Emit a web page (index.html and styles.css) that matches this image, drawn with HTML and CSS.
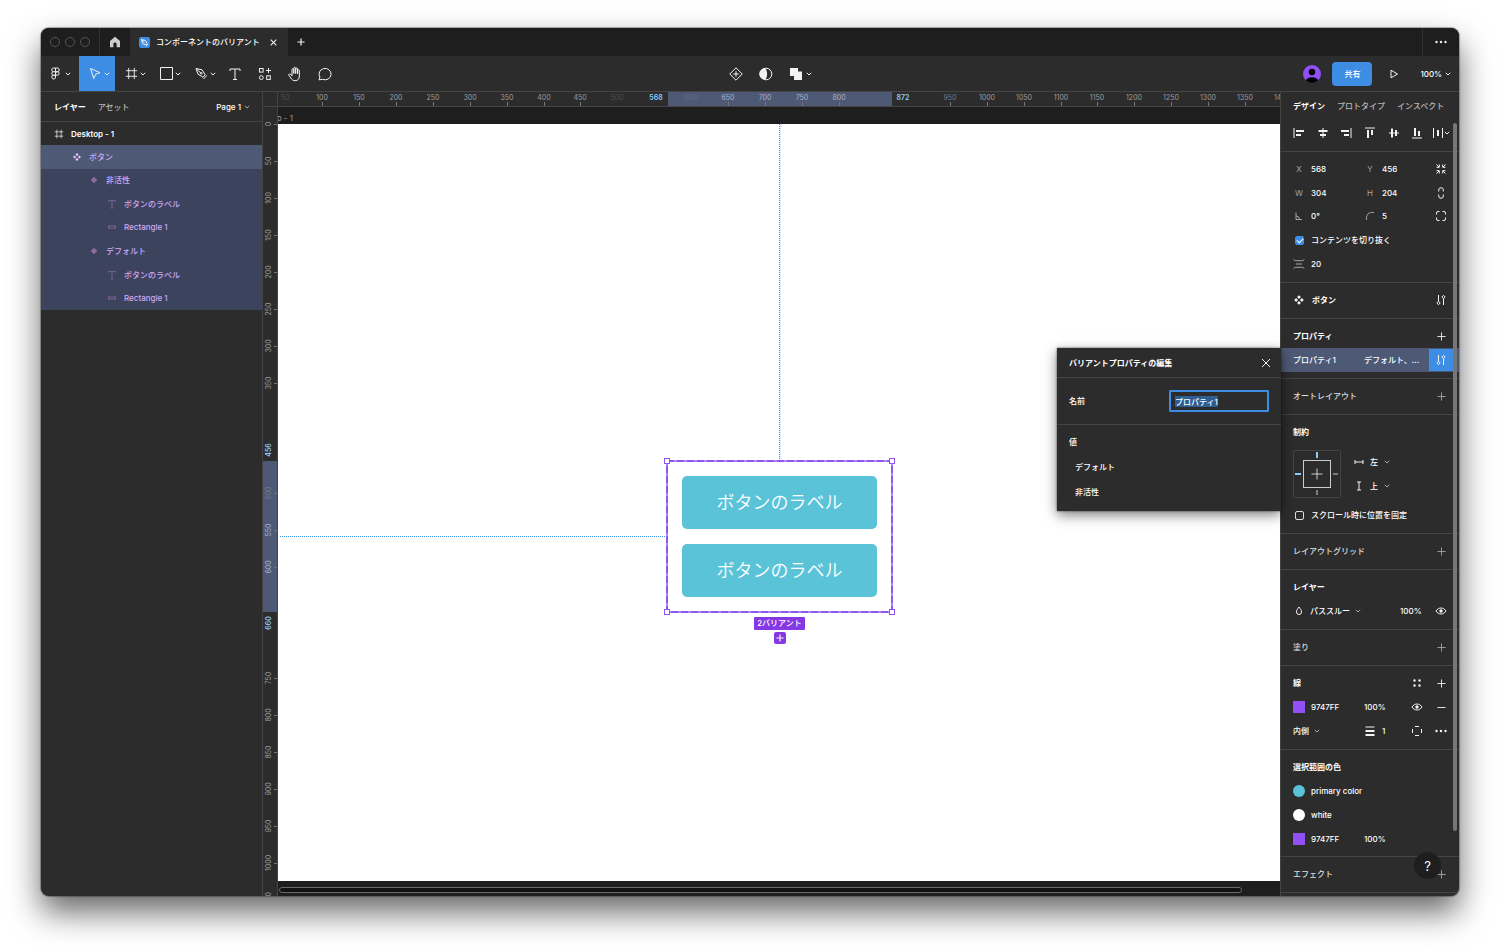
FILE: index.html
```html
<!DOCTYPE html>
<html lang="ja">
<head>
<meta charset="utf-8">
<title>コンポーネントのバリアント</title>
<link rel="stylesheet" href="styles.css">
</head>
<body>
<svg class="sprite" aria-hidden="true">
  <symbol id="chev" viewBox="0 0 6 6"><path d="M.8 1.800 3 4l2.200-2.200"/></symbol>
  <symbol id="plus" viewBox="0 0 10 10"><path d="M5 .5v9M.5 5h9"/></symbol>
  <symbol id="minus" viewBox="0 0 10 10"><path d="M.5 5h9"/></symbol>
  <symbol id="close" viewBox="0 0 10 10"><path d="m1 1 8 8M9 1 1 9"/></symbol>
  <symbol id="dots" viewBox="0 0 12 12"><g class="fill"><circle cx="1.500" cy="6" r="1.200"/><circle cx="6" cy="6" r="1.200"/><circle cx="10.500" cy="6" r="1.200"/></g></symbol>
  <symbol id="eye" viewBox="0 0 12 12"><path d="M1 6c2.500-4 7.500-4 10 0-2.500 4-7.500 4-10 0z"/><circle class="fill" cx="6" cy="6" r="1.700"/></symbol>
  <symbol id="tune" viewBox="0 0 12 12"><path d="M3.500 1v6.500M8.500 4.500V11M3.500 7.300 5.200 9 3.500 10.700 1.800 9zM8.500 1.300 10.200 3 8.500 4.700 6.800 3z"/></symbol>
  <symbol id="frame" viewBox="0 0 14 14"><path d="M4 1v12M10 1v12M1 4h12M1 10h12"/></symbol>
  <symbol id="text" viewBox="0 0 14 14"><path d="M2 4V2h10v2M7 2v10.500M5 12.500h4"/></symbol>
  <symbol id="component" viewBox="0 0 12 12"><g class="fill"><path d="m6 1.200 1.900 1.900L6 5 4.100 3.100zM6 7l1.900 1.900L6 10.800 4.100 8.900zM3.100 4.100 5 6 3.100 7.900 1.200 6zM8.900 4.100 10.800 6 8.900 7.900 7 6z"/></g></symbol>
  <symbol id="variant" viewBox="0 0 12 12"><path class="fill" d="M6 2 10 6 6 10 2 6z"/></symbol>
  <symbol id="bar" viewBox="0 0 12 12"><rect x="2" y="4.800" width="8" height="2.600"/></symbol>
</svg>

<div class="window">
  <header class="titlebar">
    <div class="lights"><i></i><i></i><i></i></div>
    <button class="home" aria-label="ホーム"><svg class="i12" viewBox="0 0 12 12"><path class="fill" d="M6 .8 11 5v6.200H7.600V8c0-2-3.200-2-3.200 0v3.200H1V5z"/></svg></button>
    <div class="doc-tab">
      <svg class="i11" viewBox="0 0 11 11"><rect class="favicon" width="11" height="11" rx="2"/><path d="M2.500 2.500 6.500 3.500 8 6.500 6.800 8 3.600 6.600zM2.500 2.500l3 3M7 9l1.800-1.800"/></svg>
      <span class="doc-name">コンポーネントのバリアント</span>
      <button aria-label="タブを閉じる"><svg class="i7 bold"><use href="#close"/></svg></button>
    </div>
    <button class="new-tab" aria-label="新しいタブ"><svg class="i8 bold"><use href="#plus"/></svg></button>
    <button class="more" aria-label="その他"><svg class="i12"><use href="#dots"/></svg></button>
  </header>

  <nav class="toolbar">
    <div class="tools">
      <button class="tool menu" aria-label="メニュー"><svg class="i13" viewBox="0 0 13 13"><path d="M6.500 1v3.700H4.600a1.850 1.850 0 0 1 0-3.700zM6.500 1h1.900a1.850 1.850 0 0 1 0 3.700H6.500M6.500 4.700v3.600H4.600a1.800 1.800 0 0 1 0-3.600M4.600 8.300h1.900V10a1.850 1.850 0 1 1-1.900-1.700z"/><circle cx="8.300" cy="6.500" r="1.800"/></svg><svg class="chev"><use href="#chev"/></svg></button>
      <button class="tool active" aria-label="移動"><svg class="i13" viewBox="0 0 13 13"><path d="m1.500 1.500 9.500 4.200-4.300 1.500-2 4.300z"/></svg><svg class="chev"><use href="#chev"/></svg></button>
      <button class="tool" aria-label="フレーム"><svg class="i13"><use href="#frame"/></svg><svg class="chev"><use href="#chev"/></svg></button>
      <button class="tool" aria-label="長方形"><svg class="i13" viewBox="0 0 13 13"><path d="M.5.5h12v12H.5z"/></svg><svg class="chev"><use href="#chev"/></svg></button>
      <button class="tool" aria-label="ペン"><svg class="i13" viewBox="0 0 13 13"><path d="M1 1.500 7 2.800l3.200 5L8 10.200 3 7.200zM1 1.500l4.600 4.300M8.500 12l3.300-3.600"/><circle cx="6.200" cy="6.300" r=".9"/></svg><svg class="chev"><use href="#chev"/></svg></button>
      <button class="tool single" aria-label="テキスト"><svg class="i14"><use href="#text"/></svg></button>
      <button class="tool single" aria-label="リソース"><svg class="i14" viewBox="0 0 14 14"><rect x="1.500" y="1.500" width="3.600" height="3.600"/><path d="M10.500 1v5M8 3.500h5"/><circle cx="3.300" cy="10.600" r="1.900"/><rect x="8.700" y="8.800" width="3.600" height="3.600"/></svg></button>
      <button class="tool single" aria-label="手のひら"><svg class="i16" viewBox="0 0 16 16"><path d="M5 9V3.600c0-1.300 1.800-1.300 1.800 0V7.500 2.300c0-1.300 1.900-1.300 1.900 0v5.200V3c0-1.300 1.900-1.300 1.900 0v5V4.700c0-1.200 1.800-1.200 1.800 0V10c0 3-1.600 4.700-4.300 4.700-2 0-3.200-.9-4.200-2.700L1.800 9.300C1.300 8 2.800 7.400 3.600 8.400L5 10z"/></svg></button>
      <button class="tool single" aria-label="コメント"><svg class="i14" viewBox="0 0 14 14"><path d="M1 12.800 1.900 10A6 5.700 0 1 1 4.600 12.300z"/></svg></button>
    </div>
    <div class="object-tools">
      <button aria-label="コンポーネント"><svg class="i14" viewBox="0 0 14 14"><path d="M7 .8 13.200 7 7 13.200.8 7zM7 4.300v5.400M4.300 7h5.400"/></svg></button>
      <button aria-label="マスク"><svg class="i14" viewBox="0 0 14 14"><circle cx="7" cy="7" r="5.800"/><path class="fill" d="M6 1.200a5.800 5.800 0 0 0 0 11.600c2.800-2 2.800-9.600 0-11.600z"/></svg></button>
      <button class="bool" aria-label="選択範囲の結合"><svg class="i14" viewBox="0 0 14 14"><path class="fill" d="M1 1h8v3.500h4V13H5V9H1z"/></svg><svg class="chev"><use href="#chev"/></svg></button>
    </div>
    <div class="session">
      <svg class="avatar" viewBox="0 0 18 18"><circle class="av-bg" cx="9" cy="9" r="9"/><circle class="av-fg" cx="9" cy="7" r="3.200"/><path class="av-fg" d="M2.800 15.500C4 11 14 11 15.200 15.500A9 9 0 0 1 2.800 15.500z"/></svg>
      <button class="share">共有</button>
      <button class="play" aria-label="プレゼンテーション"><svg class="i10" viewBox="0 0 10 10"><path d="M2 1.200 8.500 5 2 8.800z"/></svg></button>
      <button class="zoom">100%<svg class="chev"><use href="#chev"/></svg></button>
    </div>
  </nav>

  <div class="workspace">
    <aside class="layers">
      <div class="layers-head">
        <button class="on">レイヤー</button><button>アセット</button>
        <button class="page">Page 1<svg class="chev dim"><use href="#chev"/></svg></button>
      </div>
      <ul class="tree">
        <li class="root"><svg class="i10"><use href="#frame"/></svg>Desktop - 1</li>
      </ul>
      <ul class="tree picked">
        <li class="lv1"><svg class="i10"><use href="#component"/></svg>ボタン</li>
        <li class="lv2"><svg class="i10"><use href="#variant"/></svg>非活性</li>
        <li class="lv3"><svg class="i10"><use href="#text"/></svg>ボタンのラベル</li>
        <li class="lv3"><svg class="i10"><use href="#bar"/></svg>Rectangle 1</li>
        <li class="lv2"><svg class="i10"><use href="#variant"/></svg>デフォルト</li>
        <li class="lv3"><svg class="i10"><use href="#text"/></svg>ボタンのラベル</li>
        <li class="lv3"><svg class="i10"><use href="#bar"/></svg>Rectangle 1</li>
      </ul>
    </aside>

    <main class="stage">
      <div class="corner"></div>
      <svg class="ruler-x">
        <rect class="band" x="390" y="0" width="224" height="14"/>
        <path class="ticks" d="M44.500 10v4M81.500 10v4M118.500 10v4M155.500 10v4M192.500 10v4M229.500 10v4M266.500 10v4M302.500 10v4M450.500 10v4M487.500 10v4M524.500 10v4M561.500 10v4M672.500 10v4M709.500 10v4M746.500 10v4M783.500 10v4M819.500 10v4M856.500 10v4M893.500 10v4M930.500 10v4M967.500 10v4"/>
        <g>
          <text class="faint" x="7" y="8">50</text><text x="44" y="8">100</text><text x="81" y="8">150</text><text x="118" y="8">200</text><text x="155" y="8">250</text><text x="192" y="8">300</text><text x="229" y="8">350</text><text x="266" y="8">400</text><text x="302" y="8">450</text><text class="faint" x="339" y="8">500</text><text class="edge" x="378" y="8">568</text><text class="ghost" x="413" y="8">600</text><text class="in" x="450" y="8">650</text><text class="in" x="487" y="8">700</text><text class="in" x="524" y="8">750</text><text class="in" x="561" y="8">800</text><text class="edge" x="625" y="8">872</text><text class="soft" x="672" y="8">950</text><text x="709" y="8">1000</text><text x="746" y="8">1050</text><text x="783" y="8">1100</text><text x="819" y="8">1150</text><text x="856" y="8">1200</text><text x="893" y="8">1250</text><text x="930" y="8">1300</text><text x="967" y="8">1350</text><text x="1004" y="8">1400</text>
        </g>
      </svg>
      <svg class="ruler-y">
        <rect class="band" x="0" y="354" width="15" height="151"/>
        <path class="ticks" d="M11 17.500h3M11 54.500h3M11 91.500h3M11 128.500h3M11 165.500h3M11 202.500h3M11 239.500h3M11 276.500h3M11 386.500h3M11 423.500h3M11 460.500h3M11 571.500h3M11 608.500h3M11 645.500h3M11 682.500h3M11 719.500h3M11 756.500h3"/>
        <g transform="rotate(-90)">
          <text x="-17" y="8">0</text><text x="-54" y="8">50</text><text x="-91" y="8">100</text><text x="-128" y="8">150</text><text x="-165" y="8">200</text><text x="-202" y="8">250</text><text x="-239" y="8">300</text><text x="-276" y="8">350</text><text class="edge" x="-343" y="8">456</text><text class="soft" x="-386" y="8">500</text><text class="in" x="-423" y="8">550</text><text class="in" x="-460" y="8">600</text><text class="edge" x="-516" y="8">660</text><text x="-571" y="8">750</text><text x="-608" y="8">800</text><text x="-645" y="8">850</text><text x="-682" y="8">900</text><text x="-719" y="8">950</text><text x="-756" y="8">1000</text><text x="-793" y="8">1050</text>
        </g>
      </svg>
      <div class="canvas">
        <div class="frame-name"><span>Desktop - 1</span></div>
        <div class="artboard">
          <i class="guide-v"></i><i class="guide-h"></i>
          <div class="set">
            <svg class="outline"><rect class="solid" width="100%" height="100%"/><rect class="dash" width="100%" height="100%"/></svg>
            <div class="sample">ボタンのラベル</div>
            <div class="sample">ボタンのラベル</div>
            <i class="handle tl"></i><i class="handle tr"></i><i class="handle bl"></i><i class="handle br"></i>
          </div>
          <div class="set-info">
            <span class="count">2バリアント</span>
            <button class="add" aria-label="バリアントを追加"><svg class="i8 bold"><use href="#plus"/></svg></button>
          </div>
        </div>
        <div class="scroll-x"><i></i></div>

        <section class="popover">
          <header><h2>バリアントプロパティの編集</h2><button aria-label="閉じる"><svg class="i10"><use href="#close"/></svg></button></header>
          <div class="name-row"><label for="prop-name">名前</label><input id="prop-name" type="text" value="プロパティ1" autofocus></div>
          <div class="values"><h3>値</h3><p>デフォルト</p><p>非活性</p></div>
        </section>
      </div>
    </main>

    <aside class="inspector">
      <div class="tabs"><button class="on">デザイン</button><button>プロトタイプ</button><button>インスペクト</button></div>
      <div class="align">
        <button aria-label="左揃え"><svg class="i12" viewBox="0 0 12 12"><path d="M1 1v10"/><path class="thick" d="M3 4h8M3 8h5"/></svg></button>
        <button aria-label="水平方向の中央揃え"><svg class="i12" viewBox="0 0 12 12"><path d="M6 1v10"/><path class="thick" d="M1.500 4h9M3 8h6"/></svg></button>
        <button aria-label="右揃え"><svg class="i12" viewBox="0 0 12 12"><path d="M11 1v10"/><path class="thick" d="M1 4h8M4 8h5"/></svg></button>
        <button aria-label="上揃え"><svg class="i12" viewBox="0 0 12 12"><path d="M1 1h10"/><path class="thick" d="M4 3v8M8 3v5"/></svg></button>
        <button aria-label="垂直方向の中央揃え"><svg class="i12" viewBox="0 0 12 12"><path d="M1 6h10"/><path class="thick" d="M4 1.500v9M8 3v6"/></svg></button>
        <button aria-label="下揃え"><svg class="i12" viewBox="0 0 12 12"><path d="M1 11h10"/><path class="thick" d="M4 1v8M8 4v5"/></svg></button>
        <button aria-label="分布"><svg class="i12" viewBox="0 0 12 12"><path d="M1.500 1v10M10.500 1v10"/><path class="thick" d="M6 3v6"/></svg><svg class="chev"><use href="#chev"/></svg></button>
      </div>

      <section class="geometry">
        <div class="row">
          <label class="field"><span>X</span><input type="text" value="568"></label>
          <label class="field"><span>Y</span><input type="text" value="456"></label>
          <button aria-label="サイズ自動調整"><svg class="i12" viewBox="0 0 12 12"><path d="M1.500 1.500 4 4M1.500 4.300h2.800V1.500M10.500 1.500 8 4M10.500 4.300H7.700V1.500M1.500 10.500 4 8M1.500 7.700h2.800v2.800M10.500 10.500 8 8M10.500 7.700H7.700v2.800"/></svg></button>
        </div>
        <div class="row">
          <label class="field"><span>W</span><input type="text" value="304"></label>
          <label class="field"><span>H</span><input type="text" value="204"></label>
          <button aria-label="縦横比を固定"><svg class="i12" viewBox="0 0 12 12"><path d="M3.700 4.500V3a2.300 2.300 0 0 1 4.600 0v1.500M3.700 7.500V9a2.300 2.300 0 0 0 4.600 0V7.500"/></svg></button>
        </div>
        <div class="row">
          <label class="field"><svg class="i12 dim" viewBox="0 0 12 12" aria-label="回転"><path d="M3 2.500v7h6M3 6a3.500 3.500 0 0 1 3.500 3.500"/></svg><input type="text" value="0°"></label>
          <label class="field"><svg class="i12 dim" viewBox="0 0 12 12" aria-label="角の半径"><path d="M2.500 10V7.500A5 5 0 0 1 7.500 2.500H10"/></svg><input type="text" value="5"></label>
          <button aria-label="個別の角"><svg class="i12" viewBox="0 0 12 12"><path d="M1.500 4.500V3A1.500 1.500 0 0 1 3 1.500h1.500M7.500 1.500H9A1.500 1.500 0 0 1 10.500 3v1.500M10.500 7.500V9A1.500 1.500 0 0 1 9 10.500H7.500M4.500 10.500H3A1.500 1.500 0 0 1 1.500 9V7.500"/></svg></button>
        </div>
        <label class="check"><input type="checkbox" checked>コンテンツを切り抜く</label>
        <div class="row"><label class="field"><svg class="i12 dim" viewBox="0 0 12 12" aria-label="間隔"><path d="M1 1.200c.3 1.500.8 1.500 1.500 1.500h7c.7 0 1.200 0 1.500-1.500M3 6h6M1 10.800c.3-1.500.8-1.500 1.500-1.500h7c.7 0 1.200 0 1.500 1.500"/></svg><input type="text" value="20"></label></div>
      </section>

      <section>
        <div class="head"><h3 class="named"><svg class="i12"><use href="#component"/></svg>ボタン</h3><button aria-label="設定"><svg class="i12"><use href="#tune"/></svg></button></div>
      </section>
      <section>
        <div class="head"><h3>プロパティ</h3><button aria-label="追加"><svg class="i9"><use href="#plus"/></svg></button></div>
        <div class="row property"><span>プロパティ1</span><span class="clip">デフォルト、...</span><button aria-label="編集"><svg class="i12"><use href="#tune"/></svg></button></div>
      </section>
      <section>
        <div class="head"><h3 class="off">オートレイアウト</h3><button aria-label="追加"><svg class="i9 dim"><use href="#plus"/></svg></button></div>
      </section>
      <section>
        <div class="head"><h3>制約</h3></div>
        <div class="constraints">
          <svg class="pin" viewBox="0 0 48 48"><rect class="edge-box" x=".5" y=".5" width="47" height="47" rx="1"/><rect x="10.500" y="10.500" width="27" height="27"/><path d="M24 18.500v11M18.500 24h11M40 24h5M24 40v5"/><path class="on" d="M24 2v6M2 24h6"/></svg>
          <div class="picks">
            <div class="pick"><svg class="i10" viewBox="0 0 10 10"><path d="M1 3v4M9 3v4M1 5h8"/></svg><select aria-label="水平方向の制約"><option>左</option></select><svg class="chev dim"><use href="#chev"/></svg></div>
            <div class="pick"><svg class="i10" viewBox="0 0 10 10"><path d="M3 1h4M3 9h4M5 1v8"/></svg><select aria-label="垂直方向の制約"><option>上</option></select><svg class="chev dim"><use href="#chev"/></svg></div>
          </div>
        </div>
        <label class="check"><input type="checkbox">スクロール時に位置を固定</label>
      </section>
      <section>
        <div class="head"><h3 class="off">レイアウトグリッド</h3><button aria-label="追加"><svg class="i9 dim"><use href="#plus"/></svg></button></div>
      </section>
      <section>
        <div class="head"><h3>レイヤー</h3></div>
        <div class="row blend">
          <div class="pick"><svg class="i12" viewBox="0 0 12 12"><path d="M6 2C4.500 4 3.500 5.200 3.500 7a2.500 2.500 0 0 0 5 0C8.500 5.200 7.500 4 6 2z"/></svg><select aria-label="ブレンドモード"><option>パススルー</option></select><svg class="chev dim"><use href="#chev"/></svg></div>
          <input type="text" value="100%" aria-label="不透明度"><button aria-label="表示"><svg class="i12"><use href="#eye"/></svg></button>
        </div>
      </section>
      <section>
        <div class="head"><h3 class="off">塗り</h3><button aria-label="追加"><svg class="i9 dim"><use href="#plus"/></svg></button></div>
      </section>
      <section>
        <div class="head"><h3>線</h3><button aria-label="スタイル"><svg class="i12" viewBox="0 0 12 12"><g class="fill"><circle cx="3.500" cy="3.500" r="1.200"/><circle cx="8.500" cy="3.500" r="1.200"/><circle cx="3.500" cy="8.500" r="1.200"/><circle cx="8.500" cy="8.500" r="1.200"/></g></svg></button><button aria-label="追加"><svg class="i9"><use href="#plus"/></svg></button></div>
        <div class="row stroke"><label class="field"><i class="swatch violet"></i><input type="text" value="9747FF"></label><input type="text" value="100%" aria-label="線の不透明度"><button aria-label="表示"><svg class="i12"><use href="#eye"/></svg></button><button aria-label="削除"><svg class="i9"><use href="#minus"/></svg></button></div>
        <div class="row stroke"><div class="pick"><select aria-label="線の位置"><option>内側</option></select><svg class="chev dim"><use href="#chev"/></svg></div><label class="field"><svg class="i12" viewBox="0 0 12 12" aria-label="線幅"><path d="M1.500 2h9"/><path class="thick" d="M1.500 6h9M1.500 10h9"/></svg><input type="text" value="1"></label><button aria-label="個別の線"><svg class="i12" viewBox="0 0 12 12"><path d="M4 1.500h4M4 10.500h4M1.500 4v4M10.500 4v4M2.500 2.500h.1M9.500 2.500h.1M2.500 9.500h.1M9.500 9.500h.1"/></svg></button><button aria-label="詳細"><svg class="i12"><use href="#dots"/></svg></button></div>
      </section>
      <section class="colors">
        <div class="head"><h3>選択範囲の色</h3></div>
        <div class="row"><span class="style"><i class="swatch round aqua"></i>primary color</span></div>
        <div class="row"><span class="style"><i class="swatch round white"></i>white</span></div>
        <div class="row"><label class="field"><i class="swatch violet"></i><input type="text" value="9747FF"></label><input type="text" value="100%" aria-label="色の不透明度"></div>
      </section>
      <section>
        <div class="head"><h3 class="off">エフェクト</h3><button aria-label="追加"><svg class="i9 dim"><use href="#plus"/></svg></button></div>
      </section>
      <i class="scroll-y"></i>
      <button class="help" aria-label="ヘルプ">?</button>
    </aside>
  </div>
</div>
<script src="app.js"></script>
</body>
</html>
```
FILE: styles.css
```css
* { box-sizing: border-box; }
:root { --bg: #2c2c2c; --dark: #1e1e1e; --line: #444; --blue: #3d8de5; --violet: #9150f5; --band: #4e5976; }
body { margin: 0; height: 100vh; padding: 28px 41px 55px; background: #fff; color: #fff; font: 500 8px/12px Inter, "Noto Sans CJK JP", sans-serif; overflow: hidden; }
button, input, select { font: inherit; color: inherit; background: none; border: 0; padding: 0; margin: 0; }
button { display: flex; align-items: center; justify-content: center; }
h2, h3, p, ul { margin: 0; padding: 0; font-size: 8px; font-weight: 700; list-style: none; }
input[type=text] { min-width: 0; width: 100%; outline: 0; }
select { appearance: none; outline: 0; }

.sprite { position: absolute; width: 0; height: 0; }
svg { color: #f2f2f2; fill: none; stroke: currentColor; stroke-width: 1; flex: none; display: block; }
.fill { fill: currentColor; stroke: none; }
.thick { stroke-width: 2; }
.bold { stroke-width: 1.5; }
.dim { color: #a5a5a5; }
.chev { width: 6px; height: 6px; }
.i7 { width: 7px; height: 7px; }
.i8 { width: 8px; height: 8px; }
.i9 { width: 9px; height: 9px; }
.i10 { width: 10px; height: 10px; }
.i11 { width: 11px; height: 11px; }
.i12 { width: 12px; height: 12px; }
.i13 { width: 13px; height: 13px; }
.i14 { width: 14px; height: 14px; }
.i16 { width: 16px; height: 16px; }

.window { height: 100%; display: flex; flex-direction: column; border-radius: 8px; background: var(--bg); overflow: hidden; box-shadow: 0 0 1px 1px rgba(0,0,0,.3), 0 16px 32px rgba(0,0,0,.6); }

.titlebar { flex: none; height: 28px; display: flex; background: var(--dark); }
.lights { display: flex; align-items: center; gap: 5px; width: 59px; padding-left: 9px; border-right: 1px solid #333; }
.lights i { width: 10px; height: 10px; border: 1px solid #555; border-radius: 50%; }
.home { width: 30px; }
.home svg { color: #ccc; }
.doc-tab { display: flex; align-items: center; width: 158px; padding: 0 11px 0 9px; background: var(--bg); }
.doc-name { flex: 1; padding-left: 6px; white-space: nowrap; }
.favicon { fill: var(--blue); stroke: none; }
.new-tab { width: 26px; }
.more { width: 37px; margin-left: auto; border-left: 1px solid #333; }

.toolbar { flex: none; height: 35px; display: grid; grid-template-columns: 1fr auto 1fr; }
.tools, .object-tools, .session { display: flex; align-items: center; }
.tool { height: 35px; width: 35px; padding-left: 10px; gap: 2px; justify-content: flex-start; }
.tool.menu { width: 38px; padding-left: 8px; gap: 3px; }
.tool.active { width: 36px; background: var(--blue); }
.tool.single { width: 30px; padding: 0; justify-content: center; }
.object-tools { padding-left: 41px; gap: 16px; }
.bool { gap: 3px; }
.session { justify-content: flex-end; padding-right: 8px; }
.avatar { width: 18px; height: 18px; stroke: none; }
.av-bg { fill: var(--violet); }
.av-fg { fill: #000; }
.share { width: 40px; height: 24px; margin-left: 11px; background: var(--blue); border-radius: 4px; }
.play { width: 44px; }
.zoom { gap: 3px; padding-left: 4px; }

.workspace { flex: 1; min-height: 0; display: flex; }
.layers { flex: none; width: 222px; border: solid var(--line); border-width: 1px 1px 0 0; }
.layers-head { display: flex; align-items: center; gap: 12px; height: 30px; padding: 0 12px 0 13px; border-bottom: 1px solid var(--line); color: #b8b8b8; }
.layers-head .on, .tabs .on { color: #fff; font-weight: 700; }
.page { margin-left: auto; gap: 3px; color: #fff; }
.tree li { display: flex; align-items: center; gap: 7px; padding-left: 13px; font-weight: 500; }
.tree .root { height: 23px; font-weight: 600; }
.picked { display: grid; grid-auto-rows: 1fr; height: 165px; background: #3c435d; color: #d0a8f5; }
.picked svg { color: #8f6c9f; }
.picked .lv1 svg { color: #e9c4ff; }
.tree .lv1 { padding-left: 31px; background: var(--band); }
.tree .lv2 { padding-left: 48px; }
.tree .lv3 { padding-left: 66px; }

.stage { flex: 1; min-width: 0; display: grid; grid-template: 15px 1fr / 15px 1fr; border-top: 1px solid var(--line); }
.corner { border: solid var(--line); border-width: 0 1px 1px 0; }
.ruler-x { width: 100%; height: 15px; border-bottom: 1px solid var(--line); overflow: hidden; }
.ruler-y { width: 15px; height: 100%; border-right: 1px solid var(--line); overflow: hidden; }
.stage text { font-size: 7px; font-weight: 400; fill: #9c9c9c; stroke: none; text-anchor: middle; }
.stage .faint { fill: #4c4c4c; }
.stage .ghost { fill: #626b84; }
.stage .soft { fill: #747986; }
.stage .in { fill: #a9b0c4; }
.stage .edge { fill: #8ecbf5; font-weight: 600; }
.band { fill: var(--band); stroke: none; }
.ticks { stroke: #777; }
.canvas { position: relative; min-width: 0; min-height: 0; display: flex; flex-direction: column; background: var(--dark); }
.frame-name { height: 17px; width: 15px; overflow: hidden; display: flex; justify-content: flex-end; align-items: center; padding-top: 5px; color: #999; font-weight: 400; white-space: nowrap; }
.artboard { position: relative; flex: 1; background: #fff; }
.scroll-x { height: 15px; padding: 6px 38px 3px 1px; }
.scroll-x i { display: block; height: 6px; border: 1px solid #6a6a6a; border-radius: 3px; background: #111; }

.guide-v { position: absolute; left: 501px; top: 0; height: 337px; border-left: 1px dotted #3b94ea; box-shadow: 1px 0 #d9ecff; }
.guide-h { position: absolute; left: 2px; top: 412px; width: 387px; border-top: 1px dotted #3b94ea; }
.set { position: absolute; left: 389px; top: 337px; width: 225px; padding: 15px; display: grid; gap: 15px; }
.outline { position: absolute; inset: 0; width: 100%; height: 100%; overflow: visible; }
.solid { stroke: #b483fa; stroke-width: 2; }
.dash { stroke: #6d2be0; stroke-dasharray: 7 3; }
.sample { height: 53px; padding-bottom: 4px; display: flex; align-items: center; justify-content: center; border-radius: 5px; background: #5bc3d8; font: 350 18px/26px "Noto Sans CJK JP", sans-serif; }
.handle { position: absolute; width: 6px; height: 6px; background: #fff; border: 1px solid var(--violet); }
.tl { left: -3px; top: -3px; }
.tr { right: -3px; top: -3px; }
.bl { left: -3px; bottom: -3px; }
.br { right: -3px; bottom: -3px; }
.set-info { position: absolute; left: 389px; top: 493px; width: 225px; display: flex; flex-direction: column; align-items: center; gap: 2px; }
.count { padding: 0 3px; line-height: 13px; background: #8638e5; border-radius: 1px; }
.add { width: 12px; height: 12px; background: #8638e5; border-radius: 2px; }

.popover { position: absolute; z-index: 1; right: -1px; top: 241px; width: 224px; height: 163px; background: var(--bg); box-shadow: 0 4px 12px rgba(0,0,0,.5), 0 0 2px rgba(0,0,0,.6); }
.popover header, .name-row { display: flex; align-items: center; justify-content: space-between; padding: 0 10px 0 12px; border-bottom: 1px solid var(--line); }
.popover header { height: 30px; }
.name-row { height: 47px; padding-right: 12px; }
.popover .name-row input { width: 100px; height: 22px; padding: 0 4px; border: 2px solid var(--blue); border-radius: 1px; }
.name-row input::selection { background: #2f5f92; color: #fff; }
.values { padding: 11px 12px; }
.values h3 { font-weight: 500; }
.values p { padding: 13px 0 0 6px; font-weight: 500; }

.inspector { position: relative; flex: none; width: 179px; border: solid var(--line); border-width: 1px 0 0 1px; overflow: hidden; }
.tabs { display: flex; gap: 12px; height: 27px; padding-left: 12px; color: #b8b8b8; white-space: nowrap; }
.align { display: flex; height: 33px; padding: 0 6px 4px; border-bottom: 1px solid var(--line); }
.align button { flex: 1; height: 28px; }
.inspector section { padding: 5px 6px 6px 12px; border-bottom: 1px solid var(--line); }
.inspector .geometry { display: grid; grid-auto-rows: 1fr; height: 131px; }
.geometry .row, .geometry .check { height: auto; min-height: 0; }
.inspector .colors { padding-bottom: 5px; }
.head { display: flex; align-items: center; height: 24px; }
.head h3 { flex: 1; }
.head .off { font-weight: 500; color: #ddd; }
.head button, .row > button { width: 24px; height: 22px; }
.named { display: flex; gap: 7px; align-items: center; }
.row { display: grid; grid-template-columns: 71px 1fr 24px; align-items: center; height: 24px; }
.row.stroke { grid-template-columns: 71px 1fr 24px 24px; }
.row.blend { grid-template-columns: 107px 1fr 24px; }
.field, .check, .pick, .style { display: flex; align-items: center; gap: 6px; min-width: 0; white-space: nowrap; }
.style { grid-column: 1 / -1; }
.field span { width: 12px; flex: none; text-align: center; color: #a5a5a5; font-weight: 400; }
.pick { gap: 5px; }
.check { height: 24px; }
.check input { appearance: none; width: 9px; height: 9px; margin: 0 1px 0 2px; border: 1px solid #ddd; border-radius: 2px; position: relative; }
.check input:checked { background: var(--blue); border-color: var(--blue); }
.check input:checked::after { content: ""; position: absolute; left: 1px; top: 1px; width: 5px; height: 3px; border: solid #fff; border-width: 0 0 1px 1px; transform: rotate(-45deg); }
.row.property { margin: 0 -6px 0 -12px; padding: 0 6px 0 12px; background: var(--band); }
.property button { background: var(--blue); }
.clip { overflow: hidden; white-space: nowrap; }
.constraints { display: flex; gap: 13px; padding: 6px 0 5px; }
.pin { width: 48px; height: 48px; color: #ccc; }
.edge-box { stroke: #444; }
.pin .on { stroke: #8ecbf5; stroke-width: 2; }
.picks .pick { height: 24px; gap: 6px; }
.swatch { flex: none; width: 12px; height: 12px; }
.round { border-radius: 50%; }
.violet { background: var(--violet); }
.aqua { background: #5bc3d8; }
.white { background: #fff; }
.scroll-y { position: absolute; right: 2px; top: 31px; bottom: 65px; width: 4px; border-radius: 2px; background: #767676; }
.help { position: absolute; right: 18px; bottom: 17px; width: 27px; height: 27px; border-radius: 50%; background: var(--dark); font-size: 13px; font-weight: 400; }
```
FILE: app.js
```js
const nameInput = document.getElementById("prop-name");
nameInput.focus();
nameInput.select();
```
